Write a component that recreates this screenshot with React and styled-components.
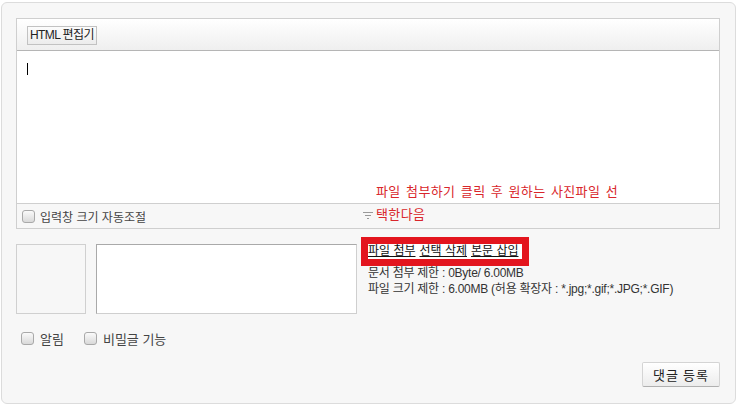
import React from 'react';
import styled, { createGlobalStyle } from 'styled-components';

/****** GLOBAL ******/
const GlobalStyle = createGlobalStyle`
  html, body {
    margin: 0;
    padding: 0;
    background: #ffffff;
  }
  body {
    font-family: "Liberation Sans", "Noto Sans CJK KR", sans-serif;
    font-size: 12px;
    color: #333;
  }
`;

/****** STYLED COMPONENTS ******/
const Page = styled.div`
  position: relative;
  padding: 2px 0 0 1px;
`;

const Wrapper = styled.div`
  width: 704px;
  height: 370px;
  padding: 15px 15px 15px 14px;
  border: 1px solid #dcdcdc;
  border-radius: 6px;
  background: #f7f7f7;
  display: flex;
  flex-direction: column;
`;

const Editor = styled.div`
  border: 1px solid #cfcfcf;
  display: flex;
  flex-direction: column;
`;

const Toolbar = styled.div`
  height: 31px;
  display: flex;
  align-items: center;
  padding-left: 10px;
  background: linear-gradient(#ffffff, #efefef);
  border-bottom: 1px solid #b5b5b5;
  box-shadow: 0 1px 0 #dedede;
`;

const ToolButton = styled.button`
  height: 19px;
  padding: 0 2px;
  margin-top: 1px;
  border: 1px solid #c2c2c2;
  background: linear-gradient(#fcfcfc, #ececec);
  font-family: "Liberation Sans", "Noto Sans CJK KR", sans-serif;
  font-size: 12px;
  color: #222;
  line-height: 16px;
  letter-spacing: -0.6px;
`;

const WriteArea = styled.div`
  height: 152px;
  background: #ffffff;
  padding: 12px 0 0 10px;
  box-sizing: border-box;
`;

const Caret = styled.span`
  display: block;
  width: 1px;
  height: 12px;
  background: #000;
`;

const BottomBar = styled.div`
  position: relative;
  height: 24px;
  border-top: 1px solid #cfcfcf;
  display: flex;
  align-items: center;
  padding-left: 5px;
`;

const Resizer = styled.span`
  position: absolute;
  left: 346px;
  top: 8px;
  display: flex;
`;

const CheckLabel = styled.label`
  display: flex;
  align-items: center;
  gap: ${props => props.$gap || 6}px;
  margin-right: ${props => props.$mr || 0}px;
  font-size: ${props => props.$size || 12}px;
  color: #444;
`;

const Check = styled.span`
  width: 11px;
  height: 11px;
  border: 1px solid #a9a9a9;
  border-radius: 3px;
  background: linear-gradient(#fafafa, #d9d9d9);
`;

const AttachRow = styled.div`
  display: flex;
  align-items: flex-start;
  margin-top: 15px;
`;

const Thumb = styled.div`
  width: 68px;
  height: 68px;
  border: 1px solid #d0d0d0;
  background: #f7f7f7;
`;

const FileList = styled.div`
  width: 259px;
  height: 68px;
  margin-left: 10px;
  border: 1px solid #cfcfcf;
  border-top-color: #a9a9a9;
  border-left-color: #a9a9a9;
  background: #ffffff;
`;

const Info = styled.div`
  margin-left: 11px;
  display: flex;
  flex-direction: column;
  line-height: 16px;
  font-size: 12px;
  color: #333;
  letter-spacing: -0.25px;
`;

const Actions = styled.div`
  align-self: flex-start;
  display: flex;
  gap: 4px;
  height: 15px;
  margin: 0 0 6px;
  padding-right: 3px;
  background: #ffffff;
  outline: 7px solid #e3151e;
  line-height: 15px;
  letter-spacing: 0;
`;

const ActionLink = styled.a`
  color: #111;
  text-decoration: underline;
  font-size: 12px;
`;

const OptionRow = styled.div`
  display: flex;
  align-items: center;
  margin-top: 15px;
  padding-left: 5px;
`;

const Footer = styled.div`
  display: flex;
  justify-content: flex-end;
  margin-top: 14px;
`;

const SubmitButton = styled.button`
  width: 78px;
  height: 25px;
  border: 1px solid #d4d4d4;
  border-bottom-color: #b0b0b0;
  border-radius: 2px;
  background: linear-gradient(#ffffff, #ececec);
  font-family: "Noto Sans CJK KR", sans-serif;
  font-size: 13px;
  color: #222;
  letter-spacing: 1px;
`;

const Annotation = styled.div`
  position: absolute;
  left: 376px;
  top: 179px;
  font-family: "Noto Sans CJK KR", sans-serif;
  font-size: 13px;
  line-height: 23px;
  color: #d9262b;
  letter-spacing: 0.4px;
  word-spacing: 2px;
`;

function ResizeIcon() {
  return (
    <svg width="10" height="7" viewBox="0 0 10 7">
      <rect x="0" y="0" width="10" height="1" fill="#999" />
      <rect x="2" y="3" width="6" height="1" fill="#999" />
      <rect x="4" y="6" width="2" height="1" fill="#999" />
    </svg>
  );
}

export default function App() {
  return (
    <Page>
      <GlobalStyle />
      <Wrapper>
        <Editor>
          <Toolbar>
            <ToolButton>HTML 편집기</ToolButton>
          </Toolbar>
          <WriteArea>
            <Caret />
          </WriteArea>
          <BottomBar>
            <CheckLabel $gap={5}>
              <Check />
              입력창 크기 자동조절
            </CheckLabel>
            <Resizer>
              <ResizeIcon />
            </Resizer>
          </BottomBar>
        </Editor>

        <AttachRow>
          <Thumb />
          <FileList />
          <Info>
            <Actions>
              <ActionLink>파일 첨부</ActionLink>
              <ActionLink>선택 삭제</ActionLink>
              <ActionLink>본문 삽입</ActionLink>
            </Actions>
            <span>문서 첨부 제한 : 0Byte/ 6.00MB</span>
            <span>파일 크기 제한 : 6.00MB (허용 확장자 : *.jpg;*.gif;*.JPG;*.GIF)</span>
          </Info>
        </AttachRow>

        <OptionRow>
          <CheckLabel $gap={6} $mr={20} $size={13}>
            <Check />
            알림
          </CheckLabel>
          <CheckLabel $gap={6} $size={13}>
            <Check />
            비밀글 기능
          </CheckLabel>
        </OptionRow>

        <Footer>
          <SubmitButton>댓글 등록</SubmitButton>
        </Footer>
      </Wrapper>

      <Annotation>
        파일 첨부하기 클릭 후 원하는 사진파일 선<br />
        택한다음
      </Annotation>
    </Page>
  );
}
